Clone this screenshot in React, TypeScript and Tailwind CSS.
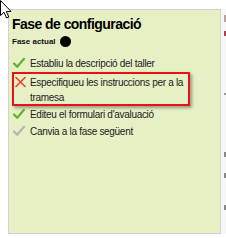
import React from "react";

const Check = ({ color }: { color: string }) => (
  <svg width="12" height="12" viewBox="0 0 12 12" className="shrink-0">
    <path d="M1 6.5 L4.2 9.8 L11 1.8" fill="none" stroke={color} strokeWidth="2.2" strokeLinecap="round" strokeLinejoin="round" />
  </svg>
);

const Cross = () => (
  <svg width="11" height="12" viewBox="0 0 11 12" className="shrink-0">
    <path d="M1 1.5 L10 10.5 M10 1.5 L1 10.5" fill="none" stroke="#e8403a" strokeWidth="1.6" strokeLinecap="round" />
  </svg>
);

export default function App() {
  const font = { fontFamily: '"Liberation Sans", Arial, sans-serif' };
  return (
    <div className="relative w-[226px] h-[238px] overflow-hidden bg-white" style={font}>
      <div className="flex pt-[9px]">
        <div className="w-[8px] shrink-0" />
        <div className="w-[213px] h-[225px] shrink-0 border border-[#d2d2d2] bg-[#e7f0c4] pl-[3px] pt-[6px]">
          <div className="text-[14px] font-bold leading-[17px] text-black tracking-[-0.55px]">Fase de configuració</div>
          <div className="flex items-center gap-[4px] mt-[3px]">
            <span className="text-[8px] font-bold leading-[10px] text-[#111]">Fase actual</span>
            <span className="w-[11px] h-[11px] rounded-full bg-black inline-block" />
          </div>
          <ul className="mt-[9px] text-[10px] leading-[15px] text-[#222] tracking-[-0.3px]">
            <li className="flex items-start gap-[5px] pl-[1px] h-[16px]">
              <span className="pt-[1px]"><Check color="#63b22c" /></span>
              <span>Establiu la descripció del taller</span>
            </li>
            <li className="w-[178px] border-2 border-[#e8131a] shadow-[2px_2px_3px_rgba(0,0,0,0.35)] flex items-start gap-[4px] pl-[1px] pt-[1px] h-[34px]">
              <span className="pt-[1px]"><Cross /></span>
              <span className="w-[158px]">Especifiqueu les instruccions per a la tramesa</span>
            </li>
            <li className="flex items-start gap-[5px] pl-[1px] mt-[1px] h-[17px]">
              <span className="pt-[1px]"><Check color="#63b22c" /></span>
              <span>Editeu el formulari d'avaluació</span>
            </li>
            <li className="flex items-start gap-[5px] pl-[1px] h-[17px]">
              <span className="pt-[1px]"><Check color="#b5b5b5" /></span>
              <span>Canvia a la fase següent</span>
            </li>
          </ul>
        </div>
        <div className="flex-1 h-[225px] bg-[#f7f7f7] relative">
          <div className="absolute left-[3px] top-[6px] w-[2px] h-[7px] bg-[#b9a39b]" />
          <div className="absolute left-[3px] top-[22px] w-[2px] h-[5px] bg-[#b04050]" />
          <div className="absolute left-[3px] top-[84px] w-[2px] h-[2px] bg-[#999]" />
          <div className="absolute left-[3px] top-[143px] w-[2px] h-[5px] bg-[#888]" />
          <div className="absolute left-[3px] top-[164px] w-[2px] h-[5px] bg-[#888]" />
          <div className="absolute left-[3px] top-[196px] w-[2px] h-[5px] bg-[#888]" />
        </div>
      </div>
      <svg className="absolute left-0 top-0" width="14" height="20" viewBox="0 0 14 20">
        <path d="M0.5 0.5 L0.5 15.5 L4 12.2 L6.6 18 L8.8 17 L6.3 11.4 L11 11.4 Z" fill="#fff" stroke="#000" strokeWidth="1" strokeLinejoin="miter" />
      </svg>
    </div>
  );
}
